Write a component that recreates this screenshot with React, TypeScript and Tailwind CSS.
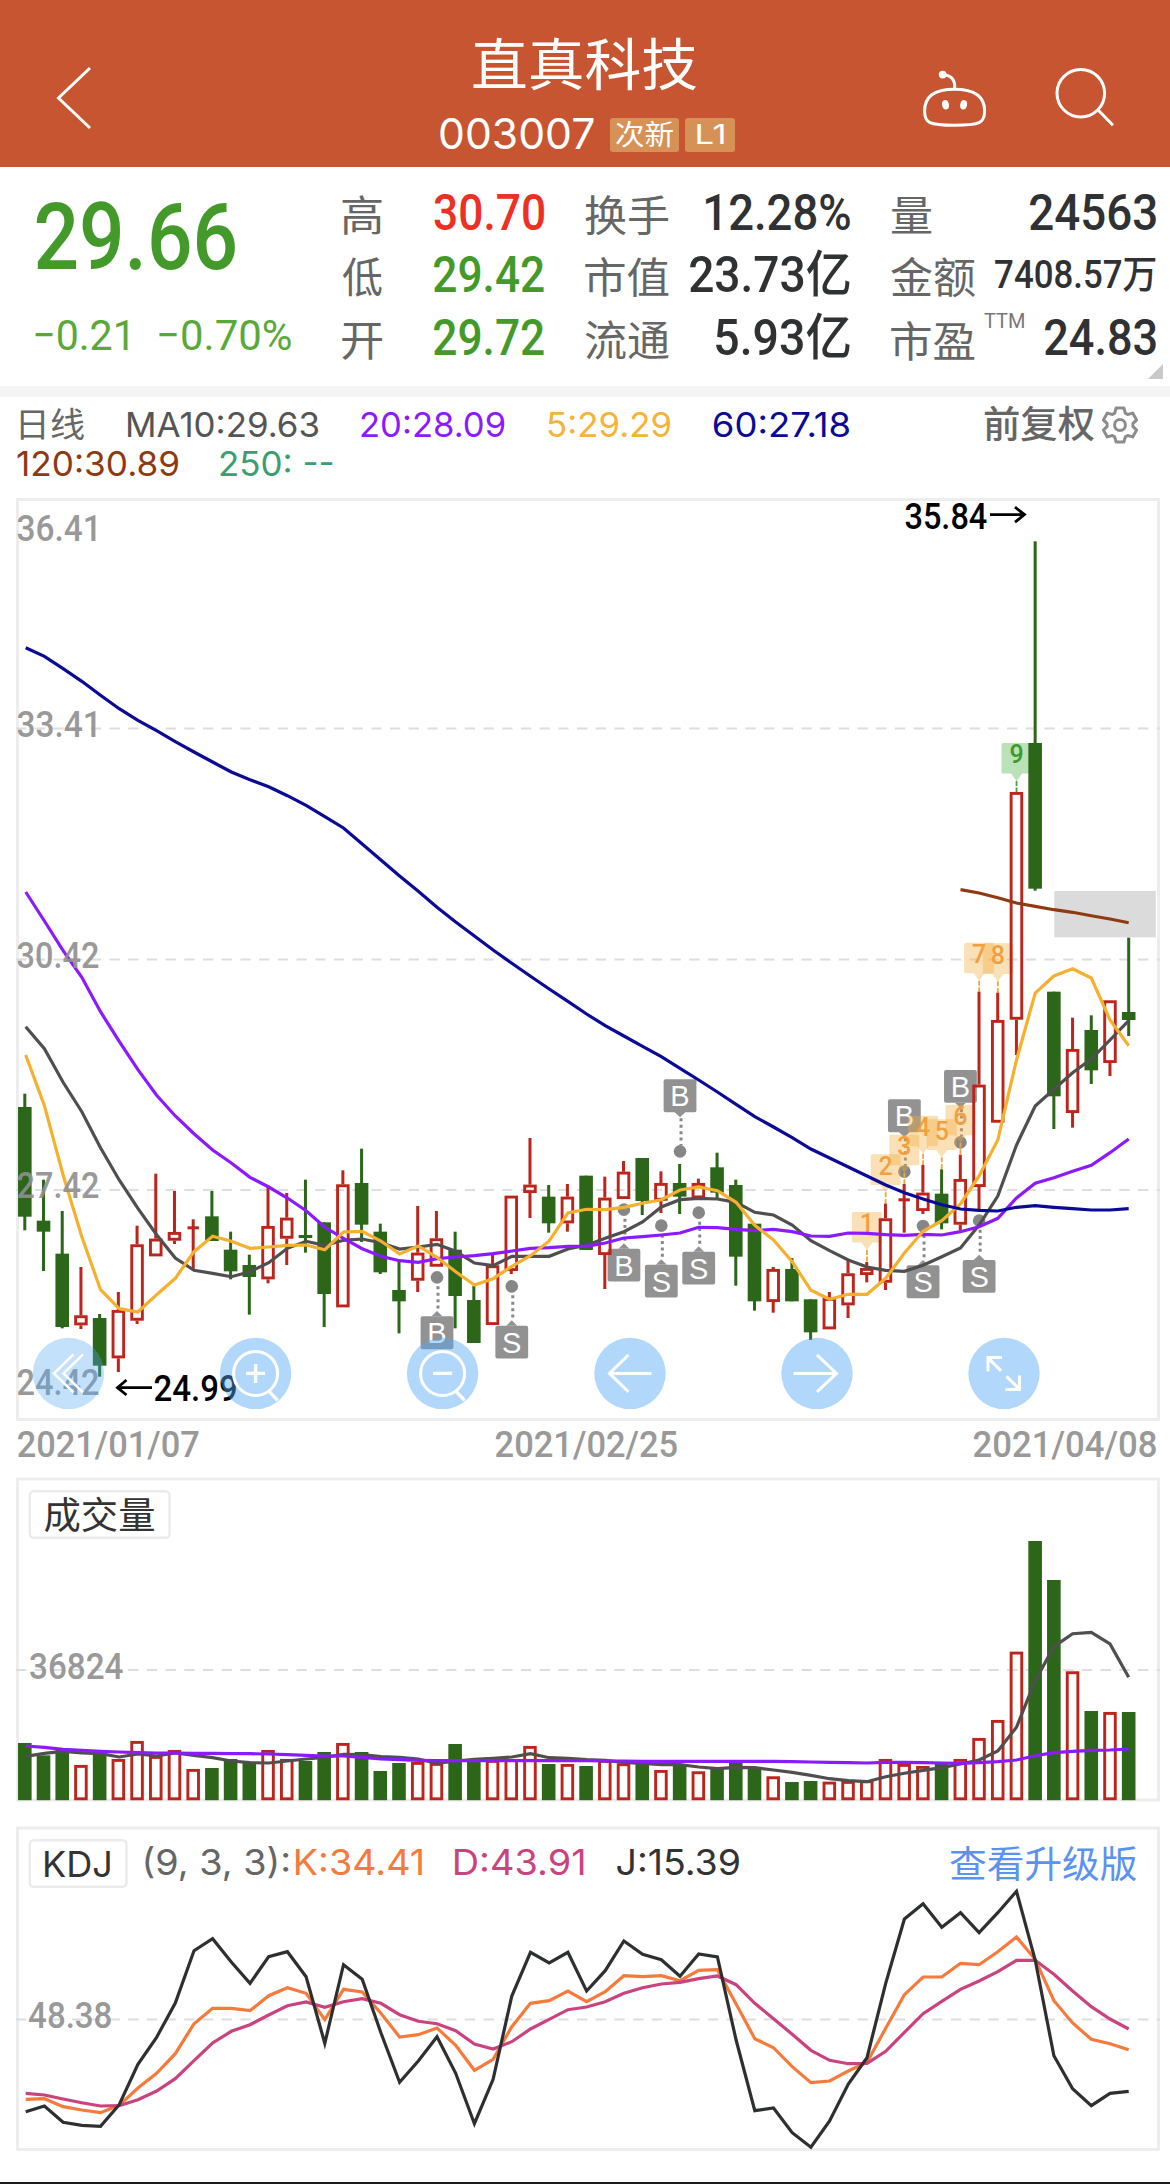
import { useLayoutEffect, useRef, type ReactNode } from "react";

const DIN = "font-['Roboto','Noto_Sans_CJK_SC',sans-serif]";
const SANS = "font-['Inter','Noto_Sans_CJK_SC',sans-serif]";

/* Visible extent of a text in its own font: left overhang and inked width. */
function inkOf(el: Element, text: string) {
  const ctx = document.createElement("canvas").getContext("2d")!;
  const cs = getComputedStyle(el);
  ctx.font = `${cs.fontWeight} ${cs.fontSize} ${cs.fontFamily}`;
  const m = ctx.measureText(text);
  return { left: m.actualBoundingBoxLeft, width: m.actualBoundingBoxLeft + m.actualBoundingBoxRight };
}

/* One line of text condensed or widened so that its ink fills the box. */
function Fit({ children, className = "" }: { children: string; className?: string }) {
  const ref = useRef<HTMLSpanElement>(null);
  useLayoutEffect(() => {
    const el = ref.current!;
    const { left, width } = inkOf(el, children);
    const s = el.parentElement!.clientWidth / width;
    el.style.transform = `translateX(${left * s}px) scaleX(${s})`;
  }, [children]);
  return (
    <span className={"block shrink-0 whitespace-nowrap " + className}>
      <span ref={ref} className="block w-max origin-left">
        {children}
      </span>
    </span>
  );
}

/* Chart label: ink starts at x, is w wide, and stands on baseline y. */
function Label({ x, y, w, children, className }: { x: number; y: number; w: number; children: string; className: string }) {
  const ref = useRef<SVGTextElement>(null);
  useLayoutEffect(() => {
    const el = ref.current!;
    const { left, width } = inkOf(el, children);
    const s = w / width;
    el.setAttribute("transform", `translate(${x + left * s} ${y}) scale(${s} 1)`);
  }, [children, x, y, w]);
  return (
    <text ref={ref} className={className}>
      {children}
    </text>
  );
}

const GREEN = "#2c6619";
const RED = "#bd241b";
const cx = (i: number) => 24.8 + i * 18.71;
const lx = (i: number) => 25.7 + i * 18.695;
const linePoints = (vals: number[], base: number, start = 0) =>
  vals.map((v, k) => `${lx(start + k).toFixed(1)},${(base + v / 3).toFixed(1)}`).join(" ");

/* [direction, high, body top, body bottom, low] in thirds of a pixel below y=960 */
const CANDLES: [string, number, number, number, number][] = [
  ["G", 401, 441, 770, 811], ["G", 659, 782, 815, 933], ["G", 753, 881, 1101, 1105], ["R", 921, 1066, 1096, 1107],
  ["G", 1062, 1074, 1217, 1250], ["R", 996, 1050, 1195, 1236], ["R", 797, 853, 1082, 1092], ["R", 641, 836, 889, 889],
  ["R", 693, 816, 842, 852], ["X", 778, 799, 808, 930], ["G", 693, 769, 843, 843], ["G", 815, 869, 934, 958],
  ["G", 884, 915, 951, 1064], ["R", 681, 798, 958, 970], ["R", 699, 773, 836, 915], ["G", 659, 825, 834, 878],
  ["G", 787, 787, 1002, 1101], ["R", 631, 673, 1042, 1042], ["G", 566, 669, 794, 846], ["G", 791, 815, 937, 942],
  ["G", 903, 990, 1024, 1120], ["R", 738, 878, 962, 996], ["R", 753, 835, 920, 920], ["G", 815, 869, 1008, 1105],
  ["G", 978, 1020, 1149, 1149], ["R", 882, 916, 1095, 1095], ["R", 707, 707, 933, 942], ["R", 534, 674, 699, 774],
  ["G", 675, 710, 790, 818], ["R", 672, 710, 790, 815], ["G", 647, 647, 870, 870], ["R", 650, 713, 885, 987],
  ["R", 603, 635, 717, 717], ["G", 594, 594, 723, 765], ["R", 634, 669, 722, 759], ["G", 612, 669, 710, 762],
  ["R", 656, 669, 715, 720], ["G", 578, 622, 698, 714], ["G", 659, 675, 890, 977], ["G", 791, 791, 1024, 1052],
  ["R", 921, 927, 1026, 1058], ["G", 894, 927, 1024, 1024], ["G", 1018, 1018, 1117, 1140], ["R", 996, 1014, 1108, 1108],
  ["R", 903, 940, 1036, 1074], ["R", 906, 924, 945, 967], ["R", 731, 775, 968, 990], ["X", 672, 715, 724, 818],
  ["R", 615, 698, 753, 762], ["G", 628, 701, 790, 808], ["R", 584, 657, 794, 811], ["R", 95, 374, 681, 748],
  ["R", 98, 180, 488, 488], ["R", -504, -504, 179, 285], ["G", -1256, -651, -214, -208], ["G", 95, 95, 409, 507],
  ["R", 173, 267, 459, 503], ["G", 166, 210, 331, 372], ["R", 121, 121, 309, 348], ["G", -67, 156, 180, 228],
];

const MA60 = [
  -937, -911, -874, -836, -794, -754, -719, -688, -655, -624, -594, -564, -541, -520, -493, -464, -430, -396, -348, -300,
  -252, -206, -158, -114, -72, -30, 10, 49, 87, 124, 162, 197, 228, 259, 290, 325, 360, 396, 433, 470,
  501, 533, 567, 594, 621, 648, 675, 698, 717, 734, 747, 751, 753, 742, 737, 742, 746, 750, 750, 746,
];
const MA20 = [
  -204, -117, -28, 52, 155, 244, 329, 406, 468, 521, 570, 609, 652, 681, 714, 752, 802, 835, 866, 889,
  902, 907, 896, 891, 887, 881, 873, 865, 863, 859, 859, 849, 834, 830, 825, 819, 802, 803, 808, 812,
  808, 815, 828, 829, 819, 820, 824, 826, 823, 825, 815, 800, 775, 714, 670, 653, 634, 616, 578, 537,
];
const MA10 = [
  200, 266, 367, 455, 563, 660, 745, 824, 894, 931, 940, 950, 935, 908, 865, 844, 856, 841, 837, 848,
  867, 861, 853, 874, 909, 917, 889, 889, 889, 867, 856, 835, 815, 786, 741, 719, 715, 717, 727, 757,
  765, 795, 842, 872, 900, 921, 931, 934, 916, 890, 864, 795, 708, 555, 438, 388, 338, 297, 240, 182,
];
const MA5 = [
  285, 437, 645, 830, 989, 1046, 1056, 1004, 955, 875, 829, 844, 865, 861, 856, 855, 869, 816, 814, 843,
  882, 858, 892, 935, 975, 956, 919, 887, 843, 759, 748, 749, 742, 730, 719, 690, 681, 692, 727, 796,
  840, 905, 991, 1018, 1003, 1003, 955, 879, 814, 782, 732, 648, 540, 300, 99, 48, 26, 54, 180, 257,
];
const MA120 = [-211, -201, -187, -171, -161, -151, -143, -133, -123, -112];

/* [bar index, letter, badge top, dot centre] */
const TRADES: [number, string, number, number][] = [
  [22, "B", 1069, 952], [26, "S", 1097, 979], [32, "B", 866, 749], [34, "S", 914, 797], [35, "B", 358, 574],
  [36, "S", 875, 758], [47, "B", 418, 635], [48, "S", 916, 798], [50, "B", 330, 547], [51, "S", 900, 782],
];
/* [bar index, count, badge top, dashed line end] */
const COUNTS: [number, number, number, number][] = [
  [45, 1, 756, 906], [46, 2, 583, 731], [47, 3, 524, 672], [48, 4, 467, 615], [49, 5, 478, 628],
  [50, 6, 434, 584], [51, 7, -52, 95], [52, 8, -50, 98], [53, 9, -651, -504],
];

const VOL =
  "G849 G886 G864 R915 G880 R897 R843 R888 R870 R927 G924 G897 G909 R870 R897 G903 G876 R849 G876 G933 " +
  "G909 R906 R909 G852 G903 R900 R897 R858 G912 R912 G918 R900 R910 G910 R930 G915 R934 G927 G906 G924 " +
  "R949 G966 G963 R965 R963 R961 R897 R912 R918 G912 R897 R834 R780 R575 G243 G360 R634 G753 R756 G756";
const VMA5 = [
  889, 880, 874, 879, 881, 891, 882, 888, 879, 886, 893, 903, 908, 909, 903, 897, 892, 883, 884, 890,
  892, 897, 910, 903, 898, 895, 891, 881, 893, 895, 899, 901, 907, 910, 914, 914, 921, 926, 922, 923,
  930, 937, 946, 956, 962, 965, 950, 940, 931, 923, 912, 900, 873, 802, 662, 560, 521, 517, 552, 652,
];
const VMA20 = [
  858, 862, 868, 871, 874, 876, 878, 879, 879, 880, 880, 881, 881, 882, 884, 886, 888, 888, 892, 897,
  899, 901, 902, 902, 902, 902, 902, 902, 902, 902, 902, 903, 903, 904, 904, 904, 904, 904, 904, 904,
  904, 905, 906, 907, 908, 909, 907, 907, 908, 909, 910, 908, 905, 900, 887, 878, 874, 871, 870, 867,
];

const J = [
  905, 888, 937, 946, 949, 884, 763, 682, 579, 422, 386, 456, 520, 440, 425, 500, 700, 464, 508, 668,
  817, 753, 680, 790, 941, 808, 558, 427, 459, 427, 543, 482, 393, 433, 449, 499, 432, 441, 690, 902,
  894, 968, 1012, 933, 822, 743, 520, 327, 281, 352, 308, 368, 308, 244, 450, 737, 836, 887, 850, 844,
];
const K = [
  868, 866, 890, 900, 908, 886, 834, 790, 731, 641, 595, 595, 602, 557, 533, 550, 629, 538, 546, 610,
  681, 674, 654, 706, 781, 748, 650, 580, 572, 543, 575, 545, 497, 500, 497, 512, 481, 479, 582, 686,
  713, 770, 818, 813, 783, 757, 655, 554, 501, 501, 460, 464, 425, 381, 448, 572, 639, 688, 701, 719,
];
const D = [
  850, 855, 867, 878, 888, 887, 869, 843, 806, 752, 699, 664, 644, 615, 587, 576, 592, 575, 566, 580,
  614, 634, 641, 662, 702, 717, 695, 657, 628, 599, 591, 575, 550, 533, 522, 517, 506, 498, 524, 580,
  626, 673, 721, 751, 761, 760, 724, 667, 611, 574, 538, 513, 485, 451, 451, 493, 543, 590, 627, 657,
];

function Line({ points, color, width = 3.2 }: { points: string; color: string; width?: number }) {
  return <polyline points={points} fill="none" stroke={color} strokeWidth={width} strokeLinejoin="miter" />;
}

function GridLine({ y }: { y: number }) {
  return <line x1="16" x2="1160" y1={y} y2={y} stroke="#dedede" strokeWidth="2" strokeDasharray="10.3 8.4" />;
}

function Candle({ i, c }: { i: number; c: [string, number, number, number, number] }) {
  const [dir, hi, top, bot, lo] = c;
  const x = cx(i);
  const y = (v: number) => 960 + v / 3;
  const color = dir === "G" ? GREEN : RED;
  const w = dir === "X" ? 11.4 : 13.6;
  return (
    <g>
      {dir === "R" ? (
        <>
          {hi < top && <rect x={x - 1.5} y={y(hi)} width="3" height={(top - hi) / 3} fill={color} />}
          {lo > bot && <rect x={x - 1.5} y={y(bot)} width="3" height={(lo - bot) / 3} fill={color} />}
          <rect x={x - 5.3} y={y(top) + 1.4} width="10.6" height={(bot - top) / 3 - 2.8} fill="none" stroke={color} strokeWidth="2.9" />
        </>
      ) : (
        <>
          <rect x={x - 1.5} y={y(hi)} width="3" height={(lo - hi) / 3} fill={color} />
          <rect x={x - w / 2} y={y(top)} width={w} height={(bot - top) / 3} fill={color} />
        </>
      )}
    </g>
  );
}

function TradeMark({ t }: { t: [number, string, number, number] }) {
  const [i, letter, topV, dotV] = t;
  const x = lx(i);
  const top = 960 + topV / 3;
  const dot = 960 + dotV / 3;
  const below = dot < top;
  const edge = below ? top : top + 32.7;
  const dir = below ? -1 : 1;
  const tip = edge + dir * 5.3;
  return (
    <g>
      <line
        x1={x + 1} x2={x + 1} y1={below ? dot + 9 : tip + 1} y2={below ? tip : dot - 6}
        stroke="#888" strokeWidth="3" strokeDasharray="3 3.4"
      />
      <circle cx={x} cy={dot} r="6.3" fill="#868686" />
      <path d={`M${x - 5.5} ${edge} L${x} ${tip} L${x + 5.5} ${edge} Z`} fill="#929292" />
      <rect x={x - 16.4} y={top} width="32.8" height="32.8" rx="2" fill="#929292" />
      <text x={x} y={top + 27} textAnchor="middle" className="fill-white font-['Liberation_Sans',sans-serif] text-[29px]">
        {letter}
      </text>
    </g>
  );
}

function CountMark({ t }: { t: [number, number, number, number] }) {
  const [i, n, topV, endV] = t;
  const x = lx(i);
  const top = 960 + topV / 3;
  const end = 960 + endV / 3;
  const green = n === 9;
  return (
    <g>
      <path
        d={`M${x - 13.5} ${top} h27 q1.5 0 1.5 1.5 v27.6 q0 1.5 -1.5 1.5 h-8 l-5.5 7.6 l-5.5 -7.6 h-8 q-1.5 0 -1.5 -1.5 v-27.6 q0 -1.5 1.5 -1.5z`}
        fill={green ? "#6fc06a" : "#f2ae3f"} fillOpacity={green ? 0.48 : 0.38}
      />
      <line x1={x} x2={x} y1={top + 38} y2={end} stroke={green ? "#4aa03a" : "#f0a63c"} strokeWidth="1.8" strokeDasharray="5 1.6" />
      <text
        x={x} y={top + 20.3} textAnchor="middle"
        className={"font-['Roboto',sans-serif] text-[25px] font-medium " + (green ? "fill-[#3c9a2c]" : "fill-[#f0a040]")}
      >
        {n}
      </text>
    </g>
  );
}

function RoundButton({ x, alpha = 0.45, children }: { x: number; alpha?: number; children: ReactNode }) {
  return (
    <g transform={`translate(${x} 1373.4)`}>
      <circle r="35.7" fill="#52a8f6" fillOpacity={alpha} />
      <g fill="none" stroke="#fff" strokeWidth="3">
        {children}
      </g>
    </g>
  );
}

const AXIS = DIN + " text-[37px] font-medium fill-[#8f8f8f] opacity-90";
const DATE = DIN + " text-[36.5px] font-medium fill-[#999999]";

function PriceChart() {
  return (
    <svg viewBox="0 498 1170 974" className="block h-[974px] w-[1170px] overflow-visible">
      <rect x="17.5" y="499.5" width="1141" height="920" fill="#fff" stroke="#ededed" strokeWidth="3" />
      <GridLine y={728.5} />
      <GridLine y={959.5} />
      <GridLine y={1190} />
      <rect x="1054.3" y="891" width="101.5" height="46.4" fill="#dbdbdb" />
      {TRADES.map((t) => <TradeMark key={t[0]} t={t} />)}
      {COUNTS.map((t) => <CountMark key={t[0]} t={t} />)}
      {CANDLES.map((c, i) => <Candle key={i} i={i} c={c} />)}
      <Line points={linePoints(MA10, 960)} color="#4f4f4f" />
      <Line points={linePoints(MA20, 960)} color="#8c1aff" />
      <Line points={linePoints(MA5, 960)} color="#f4b02e" />
      <Line points={linePoints(MA60, 960)} color="#0a0a96" />
      <Line points={linePoints(MA120, 960, 50)} color="#8f3a10" />
      <Label x={17.5} y={541} w={78} className={AXIS}>36.41</Label>
      <Label x={17.5} y={737.3} w={78} className={AXIS}>33.41</Label>
      <Label x={17.5} y={968} w={81} className={AXIS}>30.42</Label>
      <Label x={17.5} y={1198.3} w={81} className={AXIS}>27.42</Label>
      <Label x={17.5} y={1395} w={81} className={AXIS}>24.42</Label>
      <Label x={905.3} y={528.5} w={82} className={DIN + " text-[37px] font-medium fill-black"}>35.84</Label>
      <path d="M990 514.6 H1024 M1015 507.2 L1024.5 514.6 L1015 522.2" fill="none" stroke="#000" strokeWidth="2.8" />
      <Label x={154.5} y={1401.3} w={81.5} className={DIN + " text-[37px] font-medium fill-black"}>24.99</Label>
      <path d="M152 1387.7 H118 M126.5 1380 L117.5 1387.7 L126.5 1395" fill="none" stroke="#000" strokeWidth="2.8" />
      <RoundButton x={68.5} alpha={0.34}>
        <path d="M5 -19 L-14.5 0 L5 19 M14.5 -19 L-5 0 L14.5 19" strokeWidth="2.6" />
      </RoundButton>
      <RoundButton x={255.6}>
        <circle r="22" />
        <path d="M-9.5 0 H9.5 M0 -9.5 V9.5 M13 17.5 L22 27" strokeWidth="3.4" />
      </RoundButton>
      <RoundButton x={442.6}>
        <circle r="22" />
        <path d="M-9.5 0 H9.5 M13 17.5 L22 27" strokeWidth="3.4" />
      </RoundButton>
      <RoundButton x={630}>
        <path d="M21.5 0 H-20 M-1.5 -18.5 L-20.5 0 L-1.5 18.5" />
      </RoundButton>
      <RoundButton x={817}>
        <path d="M-23.5 0 H20 M0 -18.5 L19.5 0 L0 18.5" />
      </RoundButton>
      <RoundButton x={1004}>
        <path d="M-3 -2.5 L-16 -15.5 M-16 -2 V-16 H-2 M2.5 3 L15.5 16 M15.5 2 V16 H1.5" />
      </RoundButton>
      <Label x={17.6} y={1457} w={181.5} className={DATE}>2021/01/07</Label>
      <Label x={495.5} y={1457} w={182} className={DATE}>2021/02/25</Label>
      <Label x={973.5} y={1457} w={182.3} className={DATE}>2021/04/08</Label>
    </svg>
  );
}

function VolumeChart() {
  return (
    <svg viewBox="0 1472 1170 350" className="block h-[350px] w-[1170px] overflow-visible">
      <rect x="17.5" y="1479" width="1141" height="321" fill="#fff" stroke="#ededed" strokeWidth="3" />
      <GridLine y={1670} />
      <rect x="29.8" y="1491.3" width="139.8" height="46.4" rx="4" fill="#fff" stroke="#ebebeb" strokeWidth="2.4" />
      <Label x={44.5} y={1528.5} w={110} className={SANS + " text-[37px] fill-[#333]"}>成交量</Label>
      <Label x={30} y={1678.8} w={93.5} className={AXIS}>36824</Label>
      {VOL.split(" ").map((s, i) => {
        const top = 1460 + Number(s.slice(1)) / 3;
        return s[0] === "G" ? (
          <rect key={i} x={cx(i) - 6.8} y={top} width="13.6" height={1800.2 - top} fill={GREEN} />
        ) : (
          <rect key={i} x={cx(i) - 5.3} y={top + 1.4} width="10.6" height={1797.4 - top} fill="none" stroke={RED} strokeWidth="2.9" />
        );
      })}
      <Line points={linePoints(VMA5, 1460)} color="#4f4f4f" />
      <Line points={linePoints(VMA20, 1460)} color="#8c1aff" />
    </svg>
  );
}

function KdjChart() {
  return (
    <svg viewBox="0 1822 1170 360" className="block h-[360px] w-[1170px] overflow-visible">
      <rect x="17.5" y="1828" width="1141" height="321.5" fill="#fff" stroke="#ededed" strokeWidth="3" />
      <GridLine y={2019.4} />
      <rect x="29.8" y="1840.3" width="96.6" height="46.4" rx="4" fill="#fff" stroke="#ebebeb" strokeWidth="2.4" />
      <Label x={45} y={1877} w={65.5} className={SANS + " text-[35.5px] fill-[#333]"}>KDJ</Label>
      <Label x={144.8} y={1875} w={144} className={SANS + " text-[35.5px] fill-[#666]"}>(9, 3, 3):</Label>
      <Label x={296} y={1875} w={126.5} className={SANS + " text-[35.5px] fill-[#f57a3c]"}>K:34.41</Label>
      <Label x={455} y={1875} w={129} className={SANS + " text-[35.5px] fill-[#c9447e]"}>D:43.91</Label>
      <Label x={616.5} y={1875} w={122.5} className={SANS + " text-[35.5px] fill-[#333]"}>J:15.39</Label>
      <Label x={950} y={1877.5} w={187} className={SANS + " text-[37.5px] fill-[#5b92f0]"}>查看升级版</Label>
      <Label x={29} y={2028} w={82.5} className={AXIS}>48.38</Label>
      <Line points={linePoints(K, 1810)} color="#f57a3c" />
      <Line points={linePoints(D, 1810)} color="#c9447e" />
      <Line points={linePoints(J, 1810)} color="#2e3030" />
    </svg>
  );
}

function Gear() {
  const pts: string[] = [];
  for (let k = 0; k < 6; k++) {
    const a = k * 60 - 90;
    for (const [da, r] of [[-24, 13], [-13, 17.4], [13, 17.4], [24, 13]]) {
      const t = ((a + da) * Math.PI) / 180;
      pts.push(`${(20 + r * Math.cos(t)).toFixed(1)},${(20 + r * Math.sin(t)).toFixed(1)}`);
    }
  }
  return (
    <svg viewBox="0 0 40 40" className="size-10" fill="none" stroke="#8c8c8c" strokeWidth="3" strokeLinejoin="round">
      <polygon points={pts.join(" ")} />
      <circle cx="20" cy="20" r="5.4" />
    </svg>
  );
}

function Row({ children }: { children: ReactNode }) {
  return <div className="flex h-[62.5px] items-center justify-between leading-[50px]">{children}</div>;
}

const QL = SANS + " mt-[9px] text-[42px] text-[#666] ";
const QV = DIN + " pt-[3px] text-[50px] font-medium ";

export default function App() {
  return (
    <div className="flex h-[2184px] w-[1170px] flex-col overflow-hidden bg-white">
      <header className="grid h-[167px] grid-cols-[270px_1fr_270px] bg-[#c85532] text-white">
        <svg viewBox="0 0 270 167" className="h-[167px] w-[270px]" fill="none" stroke="#fff" strokeWidth="3">
          <path d="M90 68 L58.5 98 L90 128" />
        </svg>
        <div className="flex flex-col items-center pt-[33px]">
          <Fit className={SANS + " w-[224px] text-[56px] leading-[64px]"}>直真科技</Fit>
          <div className="mt-[15px] flex items-center pl-[5px]">
            <Fit className={SANS + " w-[154px] text-[43px] leading-[42px]"}>003007</Fit>
            <div className="mt-1 ml-4 flex h-[34px] w-[69px] items-center justify-center rounded-[3px] bg-[#d69157]">
              <Fit className={SANS + " w-[57px] text-[28px] leading-[34px]"}>次新</Fit>
            </div>
            <div className="mt-1 ml-1.5 flex h-[34px] w-[50px] items-center justify-center rounded-[3px] bg-[#d69157]">
              <Fit className={SANS + " w-[27px] text-[27px] leading-[34px]"}>L1</Fit>
            </div>
          </div>
        </div>
        <svg viewBox="900 0 270 167" className="h-[167px] w-[270px]" fill="none" stroke="#fff" strokeWidth="3">
          <path d="M954.3 89.3 C970 89.3 984.6 94 984.6 111 C984.6 123 980 125.3 954.3 125.3 C929 125.3 924.6 123 924.6 111 C924.6 94 939 89.3 954.3 89.3 Z" />
          <path d="M954.6 89 C955.5 80 951.5 75.5 943.5 74.8" />
          <circle cx="942.7" cy="74.6" r="3.9" fill="#fff" stroke="none" />
          <ellipse cx="945.5" cy="104.8" rx="3.4" ry="4.7" fill="#fff" stroke="none" transform="rotate(-12 945.5 104.8)" />
          <ellipse cx="963.6" cy="104.8" rx="3.4" ry="4.7" fill="#fff" stroke="none" transform="rotate(12 963.6 104.8)" />
          <circle cx="1080.8" cy="93.2" r="23.8" />
          <path d="M1097.3 109.3 L1113 125.3" />
        </svg>
      </header>

      <section className="relative flex h-[219px] pt-[13px] pr-[14px] pl-[35px]">
        <div className="w-[307px]">
          <Fit className={DIN + " mt-[23px] ml-px w-[199px] text-[92.5px] font-medium leading-[70px] text-[#439a2b]"}>29.66</Fit>
          <div className={DIN + " mt-[37px] flex gap-[31px] text-[43px] leading-[50px] text-[#5aa83a]"}>
            <Fit className="w-[93px]">−0.21</Fit>
            <Fit className="w-[132px]">−0.70%</Fit>
          </div>
        </div>
        <div className="w-[202px]">
          <Row>
            <Fit className={QL + "w-[40px]"}>高</Fit>
            <Fit className={QV + "w-[110px] text-[#ee2f24]"}>30.70</Fit>
          </Row>
          <Row>
            <Fit className={QL + "w-[40px]"}>低</Fit>
            <Fit className={QV + "w-[110px] text-[#439a2b]"}>29.42</Fit>
          </Row>
          <Row>
            <Fit className={QL + "w-[40px]"}>开</Fit>
            <Fit className={QV + "w-[110px] text-[#439a2b]"}>29.72</Fit>
          </Row>
        </div>
        <div className="ml-[41px] w-[264.5px] text-[#2f3133]">
          <Row>
            <Fit className={QL + "w-[84px]"}>换手</Fit>
            <Fit className={QV + "w-[144px]"}>12.28%</Fit>
          </Row>
          <Row>
            <Fit className={QL + "w-[84px]"}>市值</Fit>
            <Fit className={QV + "w-[160px]"}>23.73亿</Fit>
          </Row>
          <Row>
            <Fit className={QL + "w-[84px]"}>流通</Fit>
            <Fit className={QV + "w-[134px]"}>5.93亿</Fit>
          </Row>
        </div>
        <div className="ml-[41px] w-[265px] text-[#2f3133]">
          <Row>
            <Fit className={QL + "w-[41px]"}>量</Fit>
            <Fit className={QV + "w-[126px]"}>24563</Fit>
          </Row>
          <Row>
            <Fit className={QL + "w-[84px]"}>金额</Fit>
            <Fit className={DIN + " pt-[3px] w-[161px] text-[38.5px] font-medium"}>7408.57万</Fit>
          </Row>
          <Row>
            <div className="flex">
              <Fit className={QL + "w-[84px] pt-[3px]"}>市盈</Fit>
              <Fit className={DIN + " mt-[6px] ml-[9px] w-[40px] text-[20px] leading-[20px] text-[#777]"}>TTM</Fit>
            </div>
            <Fit className={QV + "w-[111px]"}>24.83</Fit>
          </Row>
        </div>
        <svg viewBox="0 0 15 15" className="absolute right-[7px] bottom-[7px] size-[15px]">
          <path d="M15 0 V15 H0 Z" fill="#c9c9c9" />
        </svg>
      </section>

      <div className="h-[11px] bg-[#f4f4f4]" />

      <section className={SANS + " h-[101px] pt-[8px] pr-[30px] text-[34px] leading-[39px]"}>
        <div className="flex h-[39px] items-center gap-[43px] pl-[20px]">
          <Fit className="w-[64px] text-[#666]">日线</Fit>
          <Fit className="w-[191px] text-[#555]">MA10:29.63</Fit>
          <Fit className="w-[144px] text-[#8c1aff]">20:28.09</Fit>
          <Fit className="w-[123px] text-[#f4b33b]">5:29.29</Fit>
          <Fit className="w-[135px] text-[#0a0a96]">60:27.18</Fit>
          <div className="ml-auto flex items-center gap-[6px]">
            <Fit className="w-[110px] text-[37px] font-medium text-[#666]">前复权</Fit>
            <Gear />
          </div>
        </div>
        <div className="flex h-[39px] items-center gap-[41px] pl-[17px]">
          <Fit className="w-[162px] text-[#8b3a12]">120:30.89</Fit>
          <Fit className="w-[113px] text-[#3a9e70]">250: --</Fit>
        </div>
      </section>

      <PriceChart />
      <VolumeChart />
      <KdjChart />
      <div className="h-[2px] bg-[#1c1c1c]" />
    </div>
  );
}
